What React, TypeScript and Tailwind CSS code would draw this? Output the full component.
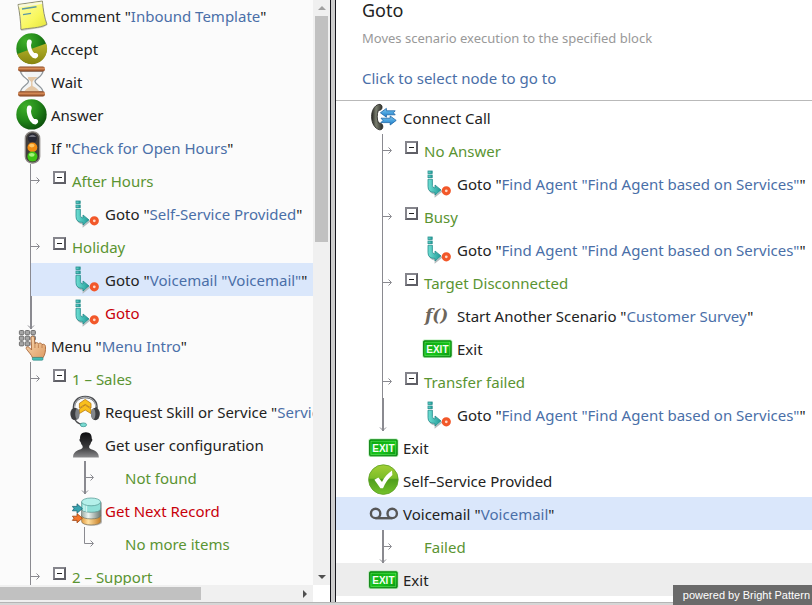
import React from 'react';
import clsx from 'clsx';

type IconName =
  | 'comment' | 'accept' | 'wait' | 'answer' | 'if' | 'goto' | 'menu' | 'skill' | 'user'
  | 'record' | 'connect' | 'scenario' | 'exit' | 'check' | 'voicemail';

type Guide = 'line' | 'branch' | 'end' | 'branchEnd' | 'elbow';

interface Node {
  label: string;
  value?: string;
  icon?: IconName;
  tone?: 'green' | 'red';
  // connector of the main trunk; rows without one sit at the root
  trunk?: Guide;
  // connector of a nested trunk
  sub?: Guide;
  toggle?: boolean;
  state?: 'selected' | 'hover';
}

const flow: Node[] = [
  { icon: 'comment', label: 'Comment', value: 'Inbound Template' },
  { icon: 'accept', label: 'Accept' },
  { icon: 'wait', label: 'Wait' },
  { icon: 'answer', label: 'Answer' },
  { icon: 'if', label: 'If', value: 'Check for Open Hours' },
  { trunk: 'branch', toggle: true, label: 'After Hours', tone: 'green' },
  { trunk: 'line', icon: 'goto', label: 'Goto', value: 'Self-Service Provided' },
  { trunk: 'branch', toggle: true, label: 'Holiday', tone: 'green' },
  { trunk: 'line', icon: 'goto', label: 'Goto', value: 'Voicemail "Voicemail"', state: 'selected' },
  { trunk: 'end', icon: 'goto', label: 'Goto', tone: 'red' },
  { icon: 'menu', label: 'Menu', value: 'Menu Intro' },
  { trunk: 'branch', toggle: true, label: '1 – Sales', tone: 'green' },
  { trunk: 'line', icon: 'skill', label: 'Request Skill or Service', value: 'Service' },
  { trunk: 'line', icon: 'user', label: 'Get user configuration' },
  { trunk: 'line', sub: 'branchEnd', label: 'Not found', tone: 'green' },
  { trunk: 'line', icon: 'record', label: 'Get Next Record', tone: 'red' },
  { trunk: 'line', sub: 'elbow', label: 'No more items', tone: 'green' },
  { trunk: 'branch', toggle: true, label: '2 – Support', tone: 'green' },
];

const findAgent = 'Find Agent "Find Agent based on Services"';

const targets: Node[] = [
  { icon: 'connect', label: 'Connect Call' },
  { trunk: 'branch', toggle: true, label: 'No Answer', tone: 'green' },
  { trunk: 'line', icon: 'goto', label: 'Goto', value: findAgent },
  { trunk: 'branch', toggle: true, label: 'Busy', tone: 'green' },
  { trunk: 'line', icon: 'goto', label: 'Goto', value: findAgent },
  { trunk: 'branch', toggle: true, label: 'Target Disconnected', tone: 'green' },
  { trunk: 'line', icon: 'scenario', label: 'Start Another Scenario', value: 'Customer Survey' },
  { trunk: 'line', icon: 'exit', label: 'Exit' },
  { trunk: 'branch', toggle: true, label: 'Transfer failed', tone: 'green' },
  { trunk: 'end', icon: 'goto', label: 'Goto', value: findAgent },
  { icon: 'exit', label: 'Exit' },
  { icon: 'check', label: 'Self–Service Provided' },
  { icon: 'voicemail', label: 'Voicemail', value: 'Voicemail', state: 'selected' },
  { trunk: 'branchEnd', label: 'Failed', tone: 'green' },
  { icon: 'exit', label: 'Exit', state: 'hover' },
];

// Shared gradients, referenced by every icon
function Gradients() {
  return (
    <svg className="absolute h-0 w-0" aria-hidden="true">
      <defs>
        <linearGradient id="g-note" x1="0" y1="0" x2="1" y2="1">
          <stop offset="0" stopColor="#fdfcae" /><stop offset="0.6" stopColor="#f8f75c" /><stop offset="1" stopColor="#e2e23c" />
        </linearGradient>
        <radialGradient id="g-green" cx="0.3" cy="0.25" r="0.85">
          <stop offset="0" stopColor="#3fae2a" /><stop offset="0.5" stopColor="#238a1a" /><stop offset="1" stopColor="#0a4a0b" />
        </radialGradient>
        <linearGradient id="g-olive" x1="0" y1="0" x2="0" y2="1">
          <stop offset="0" stopColor="#b9b62c" /><stop offset="1" stopColor="#86840f" />
        </linearGradient>
        <linearGradient id="g-wood" x1="0" y1="0" x2="0" y2="1">
          <stop offset="0" stopColor="#8a4a26" /><stop offset="0.4" stopColor="#d68a56" /><stop offset="1" stopColor="#7b3c1b" />
        </linearGradient>
        <linearGradient id="g-teal" x1="0" y1="0" x2="1" y2="0">
          <stop offset="0" stopColor="#6fe0d4" /><stop offset="1" stopColor="#1f9a97" />
        </linearGradient>
        <linearGradient id="g-user" x1="0" y1="0" x2="0" y2="1">
          <stop offset="0" stopColor="#0c0c0e" /><stop offset="0.6" stopColor="#3b3b3d" /><stop offset="1" stopColor="#8b8b8d" />
        </linearGradient>
        <linearGradient id="g-skin" x1="0" y1="0" x2="1" y2="1">
          <stop offset="0" stopColor="#fbdcb4" /><stop offset="1" stopColor="#dd9b63" />
        </linearGradient>
        <linearGradient id="g-check" x1="0" y1="0" x2="0" y2="1">
          <stop offset="0" stopColor="#a2cf35" /><stop offset="0.45" stopColor="#7cbd28" /><stop offset="0.5" stopColor="#4f9d1c" /><stop offset="1" stopColor="#74c22c" />
        </linearGradient>
        <linearGradient id="g-exit" x1="0" y1="0" x2="1" y2="1">
          <stop offset="0" stopColor="#0aa20e" /><stop offset="0.6" stopColor="#16c41a" /><stop offset="1" stopColor="#088f10" />
        </linearGradient>
        <linearGradient id="g-phone" x1="0" y1="0" x2="1" y2="0">
          <stop offset="0" stopColor="#23231f" /><stop offset="0.4" stopColor="#7b7f70" /><stop offset="1" stopColor="#292a25" />
        </linearGradient>
        <linearGradient id="g-blue" x1="0" y1="0" x2="0" y2="1">
          <stop offset="0" stopColor="#7cc9f3" /><stop offset="1" stopColor="#1a7cc9" />
        </linearGradient>
        <linearGradient id="g-glass" x1="0" y1="0" x2="1" y2="0">
          <stop offset="0" stopColor="#9aa9a3" /><stop offset="0.35" stopColor="#eef5f1" /><stop offset="1" stopColor="#6c7a74" />
        </linearGradient>
        <linearGradient id="g-orange" x1="0" y1="0" x2="1" y2="0">
          <stop offset="0" stopColor="#e39a3d" /><stop offset="0.35" stopColor="#ffe0a0" /><stop offset="1" stopColor="#c67d25" />
        </linearGradient>
      </defs>
    </svg>
  );
}

const handset =
  'M11.2 8.8 C12.2 7 15.2 7.2 15.7 9.2 C16 10.8 15.2 11.8 15 13.2 C15 16 16.4 19 18.2 21 C19.4 21 20.8 20.7 21.8 22.2 C22.8 23.8 21.6 26 19.4 26.4 C16.6 26.4 14.2 23.6 12.6 20.2 C10.9 16.4 10.1 12 11.2 8.8 Z';

function drawing(name: IconName) {
  switch (name) {
    case 'comment':
      return (
        <>
          <path d="M4 29 L5.5 32 L27 28.5 L31.5 26 Z" fill="#b9b9b0" opacity="0.7" />
          <path d="M2 5.5 L26.4 2 C27 10 28.5 19 31 25.4 C23 29.5 14 28.6 5 30.6 C4.6 22 3.6 13 2 5.5 Z" fill="url(#g-note)" stroke="#8e8e78" strokeWidth="1" />
          <path d="M2.6 6 L26 2.7 L26.2 5 L2.9 8.4 Z" fill="#f8f8dd" />
          <path d="M6 10 L20.5 7.8 M7 15.6 L15 14.4" stroke="#5b97a5" strokeWidth="1.4" fill="none" />
        </>
      );
    case 'accept':
    case 'answer':
      return (
        <>
          <circle cx="15.5" cy="16.4" r="15.2" fill="url(#g-green)" />
          {name === 'accept' && <path d="M1.3 22 L30.2 11.4 A15.2 15.2 0 0 1 1.3 22 Z" fill="url(#g-olive)" />}
          <path d={handset} fill="#ffffff" />
        </>
      );
    case 'wait':
      return (
        <>
          <path d="M4.5 6 C5 12 12.5 13.5 12.5 16.5 C12.5 19.5 5 21 4.5 27 L27 27 C26.5 21 19 19.5 19 16.5 C19 13.5 26.5 12 27 6 Z" fill="#f2f4f5" stroke="#8f979c" strokeWidth="1.3" />
          <path d="M10 12 H21.5 C19 14.5 17 15 16.4 17 L16.6 21 C20 22.5 22.5 24.5 23.5 27 H8 C9 24.5 12 22.5 15 21 L15.2 17 C14 15 12 14.5 10 12 Z" fill="#e3c6a4" />
          <path d="M7.5 7 C8 10 10 12 12 13.5" stroke="#ffffff" strokeWidth="1.4" fill="none" />
          <rect x="2" y="1.5" width="27" height="5" rx="2.2" fill="url(#g-wood)" />
          <rect x="2" y="26.3" width="27" height="5.2" rx="2.2" fill="url(#g-wood)" />
        </>
      );
    case 'if':
      return (
        <>
          <rect x="9.3" y="0.8" width="14.4" height="31.2" rx="6.6" fill="#403d3b" stroke="#8d8884" strokeWidth="1.3" />
          <circle cx="16.4" cy="7.2" r="4.6" fill="#272733" />
          <path d="M12.6 6 A4.4 4.4 0 0 1 20.2 6 Z" fill="#74747e" />
          <circle cx="16.4" cy="16.4" r="4.9" fill="#f28c12" />
          <ellipse cx="15.8" cy="14.6" rx="2.8" ry="1.8" fill="#ffc664" />
          <circle cx="16.4" cy="25.6" r="5" fill="#3ec313" />
          <ellipse cx="15.8" cy="23.8" rx="2.8" ry="1.9" fill="#a6f27c" />
        </>
      );
    case 'goto':
      return (
        <>
          <path d="M7.4 13 V21.5 Q8 26.6 13.4 26.6 V29 L20 23.8" fill="none" stroke="#b3bbbd" strokeWidth="1.6" />
          <g fill="url(#g-teal)" stroke="#238c8b" strokeWidth="0.8">
            <rect x="6" y="4" width="4.2" height="2.4" />
            <rect x="6" y="8" width="4.2" height="2.6" />
            <path d="M6 12.2 H10.4 V18.4 Q10.4 21 13 21 V18 L19 22.9 L13 27.9 V25.4 Q6 25.6 6 19.6 Z" />
          </g>
          <circle cx="24.3" cy="23.8" r="3" fill="#ffd9c8" stroke="#f2582a" strokeWidth="3.2" />
        </>
      );
    case 'menu':
      return (
        <>
          {[3.4, 9, 14.6].map((y) =>
            [5, 10.8, 16.6].map((x) => (
              <rect key={`${x}-${y}`} x={x - 1.6} y={y - 1.9} width="4.4" height="4.2" rx="1" fill="#a6a6a6" stroke="#646464" strokeWidth="0.9" />
            )),
          )}
          <path d="M15 9 C15 6.6 18.2 6.6 18.4 9 L18.9 15 C20 13 21.9 13.4 22.4 15 C23.6 13.4 25.6 14 26 15.6 C27.6 14.6 29.4 15.6 29.5 17.5 C29.7 22 29.2 25.6 26.8 29 L16.6 29 C15.6 25.6 12.2 22.8 10.2 19.6 C9.8 17.6 12 17.2 13.4 18.6 L15.6 21 Z" fill="url(#g-skin)" stroke="#a9683a" strokeWidth="0.9" />
          <path d="M18.9 15 V19 M22.4 15.4 V19 M26 16 V19" stroke="#b97a4a" strokeWidth="0.8" fill="none" />
          <rect x="16.4" y="28.4" width="10.6" height="2.8" rx="1" fill="#45bdb5" stroke="#27827e" strokeWidth="0.6" />
        </>
      );
    case 'skill':
      return (
        <>
          <path d="M4 15 C3 6.5 8 2 15.2 2 C22.6 2 27.6 6.5 26.4 15" fill="none" stroke="#4b4d50" strokeWidth="2.4" />
          <path d="M4.5 13 C4.4 6.6 8.6 2.2 15.2 2.2 C21 2.2 25.6 5.8 26 12" fill="none" stroke="#c9ccd0" strokeWidth="0.9" />
          <g fill="#f9bf1d" stroke="#b97808" strokeWidth="0.8">
            <path d="M9.4 8.4 L15.2 4.4 L21 8.4 V13 L15.2 9.4 L9.4 13 Z" />
            <path d="M9.4 14 L15.2 10 L21 14 V18.6 L15.2 15 L9.4 18.6 Z" />
          </g>
          <ellipse cx="4.8" cy="19" rx="4.4" ry="6.2" fill="#3d3e40" />
          <ellipse cx="7.4" cy="19" rx="2.2" ry="5.4" fill="#7e8184" />
          <ellipse cx="25.4" cy="19" rx="4.4" ry="6.2" fill="#3d3e40" />
          <ellipse cx="23.2" cy="19" rx="2.2" ry="5.4" fill="#85888b" />
          <path d="M5 24 C6 27.6 8.6 28.6 12 29.4" stroke="#4a4c4e" strokeWidth="1.2" fill="none" />
          <ellipse cx="13.4" cy="29.8" rx="3.2" ry="1.9" fill="#7adbd2" stroke="#2f918c" strokeWidth="0.7" />
        </>
      );
    case 'user':
      return (
        <path d="M15.9 4.2 C20.2 4.2 22 7 21.7 10.6 C22.8 11 22.4 13.6 21.2 14 C20.8 16 19.8 17.2 19.2 18 V19.8 C20.2 22.2 28.9 21.6 28.9 29.4 H3 C3 21.6 11.6 22.2 12.6 19.8 V18 C12 17.2 11 16 10.6 14 C9.4 13.6 9 11 10.1 10.6 C9.8 7 11.6 4.2 15.9 4.2 Z" fill="url(#g-user)" />
      );
    case 'record':
      return (
        <>
          <path d="M12 24 V28 C12 33 32 33 32 28 V8" fill="#ababab" opacity="0.8" />
          <path d="M11.6 21 V27.6 C11.6 32 30.6 32 30.6 27.6 V21 Z" fill="url(#g-orange)" stroke="#8a7856" strokeWidth="0.7" />
          <path d="M11.6 14.5 V21.6 C11.6 26 30.6 26 30.6 21.6 V14.5 Z" fill="url(#g-glass)" stroke="#67736d" strokeWidth="0.7" />
          <path d="M11.6 8 V15 C11.6 19.4 30.6 19.4 30.6 15 V8 Z" fill="#8fe0d8" stroke="#568e89" strokeWidth="0.7" />
          <path d="M14 9 V17 M16.4 9 V18" stroke="#e9fffc" strokeWidth="1.5" opacity="0.7" />
          <ellipse cx="21.1" cy="7.9" rx="9.5" ry="3.9" fill="#b4f0ea" stroke="#5da09b" strokeWidth="0.8" />
          <path d="M2.4 12.4 H7 V9.8 L12.4 14.6 L7 19.2 V16.8 H2.4 L4 14.6 Z" fill="#38a3b0" stroke="#1b6674" strokeWidth="0.8" />
          <path d="M2.4 22.2 H7 V19.6 L12.4 24.2 L7 28.8 V26.4 H2.4 L4 24.2 Z" fill="#f4762c" stroke="#9a4413" strokeWidth="0.8" />
        </>
      );
    case 'connect':
      return (
        <>
          <path d="M10.8 3.4 C13 3 14.4 4.6 14 6.8 C13.8 8.6 12.6 9.4 10.4 9.4 C8.8 13 8.8 18.6 10.6 22 C13 21.8 14.4 22.8 14.8 25 C15 27.4 13.8 29 11.6 28.8 C6.6 27.6 3.6 22 3.6 15.6 C3.6 9.6 6.4 4.4 10.8 3.4 Z" fill="url(#g-phone)" stroke="#2d2d29" strokeWidth="0.9" />
          <g fill="url(#g-blue)" stroke="#1d64a6" strokeWidth="0.8">
            <path d="M12.4 11.8 L18.4 7.4 V9.8 H27.2 L25.4 11.8 L27.2 13.8 H18.4 V16.2 Z" />
            <path d="M28.2 19.4 L22.2 15 V17.2 H13 L15 19.4 L13 21.6 H22.2 V24 Z" />
          </g>
        </>
      );
    case 'scenario':
      return (
        <text x="3" y="22" fill="#6c665c" className="font-['DejaVu_Serif',serif] text-[17px] font-bold italic">
          f()
        </text>
      );
    case 'exit':
      return (
        <>
          <rect x="0.4" y="7.6" width="30" height="18.4" rx="2" fill="#7be27b" opacity="0.55" />
          <rect x="1.6" y="8.8" width="27.6" height="16" rx="1" fill="url(#g-exit)" stroke="#067a0c" strokeWidth="0.9" />
          <rect x="3" y="10.2" width="24.8" height="13.2" fill="none" stroke="#5ee05e" strokeWidth="0.6" />
          <text x="15.4" y="20.6" textAnchor="middle" fill="#f4fff2" className="font-['Liberation_Sans',sans-serif] text-[10px] font-bold">
            EXIT
          </text>
        </>
      );
    case 'check':
      return (
        <>
          <circle cx="15.4" cy="15.6" r="14.8" fill="url(#g-check)" stroke="#5c9f22" strokeWidth="0.8" />
          <path d="M6.4 15.8 L10.4 13.4 L14 18 C16.4 13.4 19.6 9.6 24 6.6 L24.4 11 C20.4 14.4 17.4 18.6 15 24.2 H12.4 Z" fill="#ffffff" />
        </>
      );
    case 'voicemail':
      return (
        <g fill="none" stroke="#565656" strokeWidth="2.4">
          <circle cx="7.6" cy="16.4" r="4.7" />
          <circle cx="24.2" cy="16.4" r="4.7" />
          <path d="M7.6 21.2 H24.2" />
        </g>
      );
  }
}

function NodeIcon({ name }: { name: IconName }) {
  return (
    <svg width="32" height="33" viewBox="0 0 32 33" className="shrink-0 overflow-visible" aria-hidden="true">
      {drawing(name)}
    </svg>
  );
}

function Connector({ kind, nested }: { kind: Guide; nested?: boolean }) {
  const branch = kind === 'branch' || kind === 'branchEnd' || kind === 'elbow';
  const end = kind === 'end' || kind === 'branchEnd';
  return (
    <svg
      width="31"
      height="33"
      viewBox="0 0 31 33"
      className={clsx('relative shrink-0 overflow-visible', nested && 'ml-[23px]')}
      fill="none"
      stroke="#8a8a90"
      aria-hidden="true"
    >
      <path d={kind === 'elbow' ? 'M30.5 0 V16.5' : 'M30.5 0 V33'} />
      {end && <path d="M31.5 0 V33 M28 29.5 L31 32.5 L34 29.5" />}
      {branch && <path d="M30.5 16.5 H39 M36.5 13.5 L39.5 16.5 L36.5 19.5" />}
    </svg>
  );
}

function ToggleButton({ label }: { label: string }) {
  return (
    <button
      type="button"
      aria-label={`Collapse ${label}`}
      className="mt-[7px] mr-1.5 flex size-[13px] shrink-0 items-center justify-center self-start border-2 border-t-[#85858c] border-r-[#5f5f66] border-b-[#5f5f66] border-l-[#85858c] bg-white"
    >
      <span className="h-px w-[5px] bg-[#222]" />
    </button>
  );
}

function TreeRow({ node }: { node: Node }) {
  const { label, value, icon, tone, trunk, sub, toggle, state } = node;
  const fill = clsx(state === 'selected' && 'bg-[#dae7fb]', state === 'hover' && 'bg-[#ededed]');
  return (
    <li className={clsx('flex h-[33px] whitespace-nowrap', !trunk && fill)}>
      {trunk && <Connector kind={trunk} />}
      <div
        className={clsx(
          'flex flex-1 items-center',
          trunk && fill,
          !trunk && 'pl-4',
          trunk && toggle && 'pl-[22px]',
          trunk && icon && 'pl-[39px]',
          trunk && !toggle && !icon && !sub && 'pl-[41px]',
        )}
      >
        {sub && <Connector kind={sub} nested />}
        {toggle && <ToggleButton label={label} />}
        {icon && <NodeIcon name={icon} />}
        <span
          className={clsx(
            icon && 'pl-[3px]',
            sub && 'pl-10',
            tone === 'green' && 'text-[#5a9432]',
            tone === 'red' && 'text-[#c8000a]',
          )}
        >
          {label}
          {value && (
            <>
              {' "'}
              <span className="text-[#4a6fa8]">{value}</span>
              {'"'}
            </>
          )}
        </span>
      </div>
    </li>
  );
}

function ScenarioPanel() {
  return (
    <section aria-label="Scenario flow" className="grid min-h-0 min-w-0 flex-[330] grid-cols-[1fr_17px] grid-rows-[1fr_17px]">
      <div className="min-h-0 min-w-0 overflow-hidden bg-[#fbfbfb]">
        <ul className="-mt-px">
          {flow.map((node, i) => (
            <TreeRow key={i} node={node} />
          ))}
        </ul>
      </div>

      {/* Vertical scrollbar */}
      <div className="flex flex-col items-center bg-[#f0f0f0]">
        <button type="button" aria-label="Scroll up" className="flex h-4 w-full items-center justify-center">
          <span className="border-x-4 border-b-4 border-x-transparent border-b-[#a0a0a0]" />
        </button>
        <div className="flex w-[13px] flex-1 flex-col">
          <div className="h-[41%] bg-[#c1c1c1]" />
        </div>
        <button type="button" aria-label="Scroll down" className="flex h-[17px] w-full items-center justify-center">
          <span className="border-x-4 border-t-4 border-x-transparent border-t-[#505050]" />
        </button>
      </div>

      {/* Horizontal scrollbar */}
      <div className="flex items-center bg-[#f0f0f0]">
        <div className="flex-1">
          <div className="h-[13px] w-[68%] bg-[#c1c1c1]" />
        </div>
        <button type="button" aria-label="Scroll right" className="flex h-full w-[17px] items-center justify-center">
          <span className="border-y-4 border-l-4 border-y-transparent border-l-[#505050]" />
        </button>
      </div>
      <div className="bg-white" />
    </section>
  );
}

// Same row as in the scenario flow, indented, with the fill running edge to edge
function TargetRow({ node }: { node: Node }) {
  return (
    <li
      className={clsx(
        'pl-4',
        node.state === 'selected' && 'bg-[#dae7fb]',
        node.state === 'hover' && 'bg-[#ededed]',
      )}
    >
      <ul>
        <TreeRow node={node} />
      </ul>
    </li>
  );
}

function DetailsPanel() {
  return (
    <section aria-label="Block settings" className="min-w-0 flex-[476] bg-white">
      <header className="border-b border-[#b9b9b9] pb-3 pl-[26px]">
        <h2 className="text-[18px] leading-5 text-[#222]">Goto</h2>
        <p className="mt-2.5 text-[13px] leading-4 text-[#999]">Moves scenario execution to the specified block</p>
        <a href="#select-node" className="mt-[22px] block leading-5 text-[#4a6fa8]">
          Click to select node to go to
        </a>
      </header>
      <ul>
        {targets.map((node, i) => (
          <TargetRow key={i} node={node} />
        ))}
      </ul>
    </section>
  );
}

export default function App() {
  return (
    <div className="relative flex h-screen flex-col overflow-hidden bg-white font-['Noto_Sans','Open_Sans',sans-serif] text-[15px] leading-5 text-[#222]">
      <Gradients />
      <main className="flex min-h-0 flex-1">
        <ScenarioPanel />
        <div role="separator" aria-orientation="vertical" className="w-1.5 shrink-0 border-x border-[#15151c] bg-[#cdcdcd]" />
        <DetailsPanel />
      </main>
      <footer className="h-[3px] shrink-0 border-t border-[#b5b5b5] bg-[#d6d6d6]">
        <span className="absolute right-0 bottom-0 bg-[#6a6a6a] pr-0.5 pl-2.5 font-['Liberation_Sans',sans-serif] text-[11px] leading-5 text-white">
          powered by Bright Pattern
        </span>
      </footer>
    </div>
  );
}
